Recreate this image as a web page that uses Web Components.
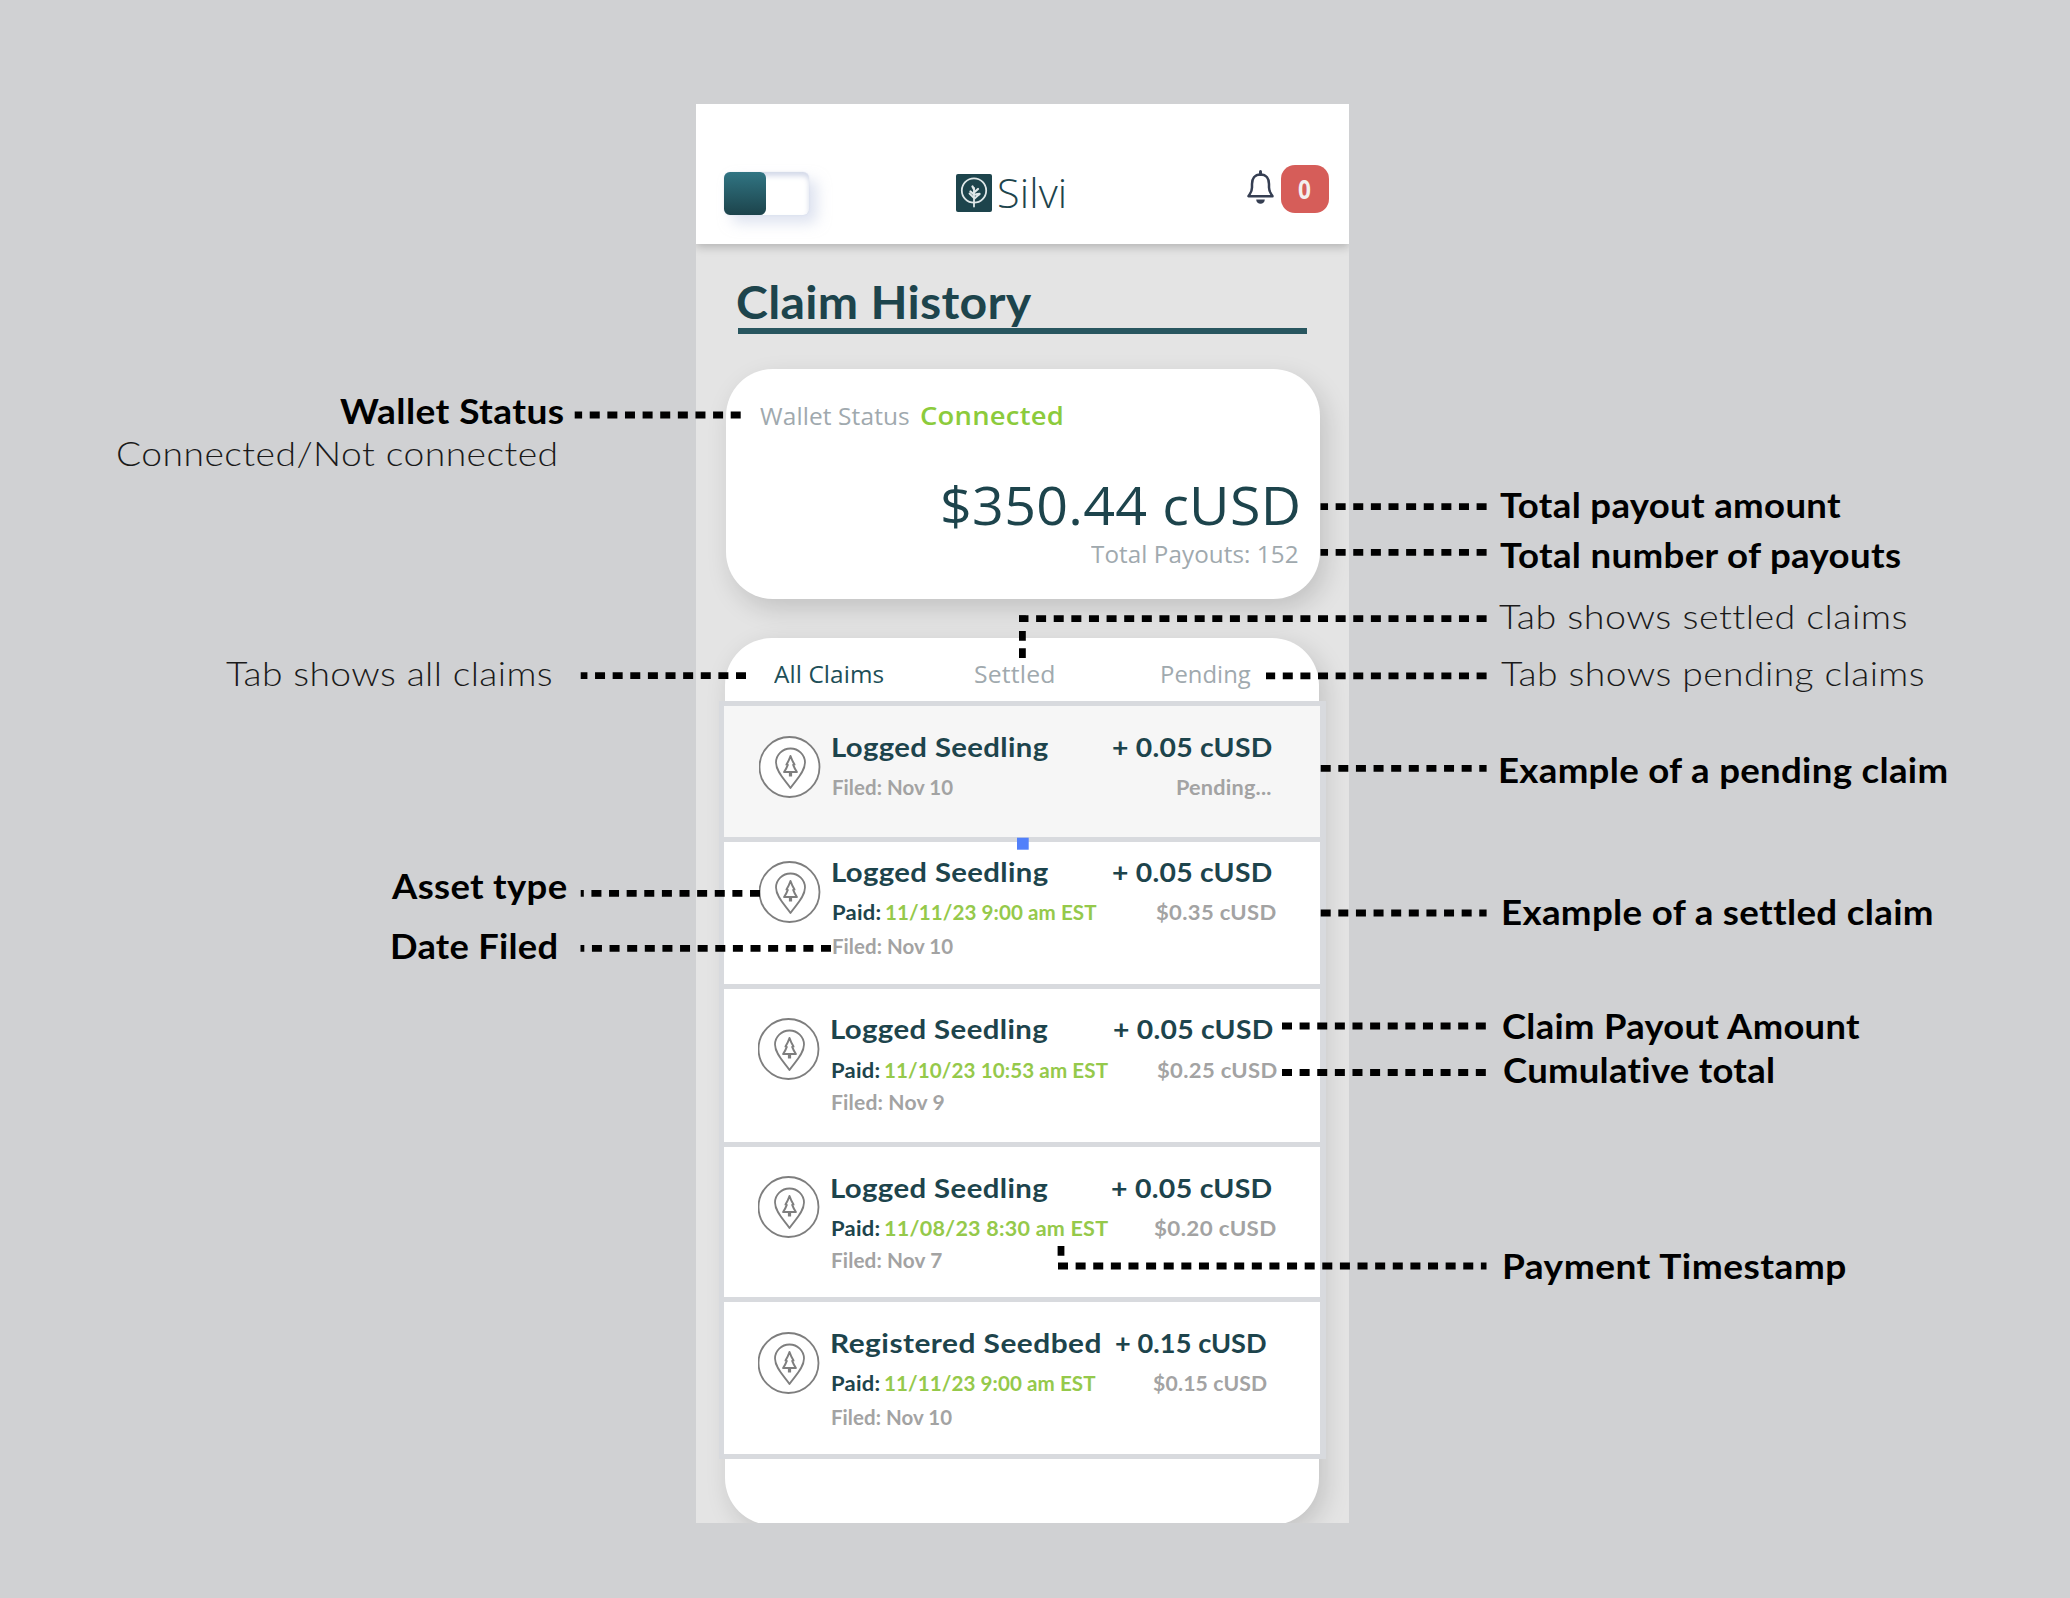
<!DOCTYPE html>
<html lang="en">
<head>
<meta charset="utf-8">
<title>Silvi – Claim History</title>
<style>
html,body{margin:0;padding:0}
body{background:#d0d1d3;width:2070px;height:1598px;overflow:hidden;font-family:Lato,"Open Sans",sans-serif}
</style>
</head>
<body>
<annotated-board></annotated-board>
<script>
const NEXA='Lato,"Open Sans",sans-serif', NUN='"Open Sans","Noto Sans",sans-serif';
const pen=document.createElement('canvas').getContext('2d');

/* A single line of text whose ink spans exactly `w` pixels: mostly by widening
   the glyphs, the remainder by tracking. */
class FitText extends HTMLElement{
  connectedCallback(){
    const g=(n,d)=>this.getAttribute(n)||d;
    const w=+g('w'),s=+g('s'),wt=g('wt','700'),f=g('f')==='nun'?NUN:NEXA,t=this.textContent;
    pen.font=`${wt} ${s}px ${f}`;
    const m=pen.measureText(t),ink=m.actualBoundingBoxLeft+m.actualBoundingBoxRight;
    const k=t.length>1?Math.pow(w/ink,.8):w/ink;
    const ls=t.length>1?(w/k-ink)/(t.length-1):0;
    const root=this.attachShadow({mode:'open'});
    root.innerHTML=`<style>:host{display:block;flex:none;width:${w}px;white-space:nowrap;font:${wt} ${s}px/1.2 ${f};color:${g('c','#000')}}
      span{display:block;width:max-content;margin-left:${m.actualBoundingBoxLeft*k}px;letter-spacing:${ls}px;transform:scaleX(${k});transform-origin:0 0}</style><span><slot></slot></span>`;
  }
}
customElements.define('fit-text',FitText);

class SilviToggle extends HTMLElement{
  connectedCallback(){
    this.attachShadow({mode:'open'}).innerHTML=`<style>
    :host{display:flex;width:85px;height:43px;border-radius:6px;background:#fff;box-shadow:8px 8px 14px rgba(190,200,225,.5),0 0 2px rgba(190,200,225,.4),inset 0 4px 5px rgba(170,182,212,.5)}
    i{width:42px;border-radius:6px;background:linear-gradient(#317583,#1c434b)}</style><i></i>`;
  }
}
customElements.define('silvi-toggle',SilviToggle);

class SilviHeader extends HTMLElement{
  connectedCallback(){
    this.attachShadow({mode:'open'}).innerHTML=`<style>
    :host{display:flex;box-sizing:border-box;height:139.500px;background:#fff;padding-left:28px;align-items:flex-start;box-shadow:0 3px 9px rgba(0,0,0,.22);position:relative}
    silvi-toggle{margin-top:68px}
    .brand{display:flex;margin:70px 0 0 147px}
    .brand fit-text{margin:-5.500px 0 0 7.500px}
    .bell{margin:66px 0 0 181.500px}
    .badge{display:flex;justify-content:center;align-items:center;width:48px;height:48px;margin:61px 0 0 6px;border-radius:14px;background:#d65d59}
    .badge fit-text{margin-top:-2px}
    svg{display:block;flex:none}</style>
    <silvi-toggle></silvi-toggle>
    <div class="brand">
      <svg width="36" height="38" viewBox="0 0 36 38"><rect width="36" height="38" rx="2" fill="#1d444c"/>
        <g fill="none" stroke="#dfe7e8" stroke-width="1.8" stroke-linecap="round"><circle cx="18" cy="16.5" r="12.2"/>
        <path d="M18 32.5V14M18 25l5-4.5M18 24l-4.500-4.500" /><path d="M18 20.500l-3.500-3M18 18.500l4-3.500M17.800 15l-1.300-2.500M20 20.500l3.500-.5" stroke-width="2.300"/></g></svg>
      <fit-text w="65" s="40" wt="300" f="nun" c="#1d444c">Silvi</fit-text>
    </div>
    <svg class="bell" width="29" height="36" viewBox="0 0 29 36"><path d="M14.500 4.500C8.500 4.500 6 9 6 14v3.500c0 4.500-2 6-3.500 8.700h24C25 23.500 23 22 23 17.500V14c0-5-2.500-9.500-8.500-9.500z" fill="none" stroke="#353e52" stroke-width="2.500" stroke-linejoin="round"/><path d="M14.500 1.500v3" stroke="#353e52" stroke-width="3" stroke-linecap="round"/><path d="M10.200 29.500h8.600a4.300 4.300 0 0 1-8.600 0z" fill="#353e52"/></svg>
    <div class="badge"><fit-text w="11.5" s="27.500" wt="700" f="nun" c="#f3efee">0</fit-text></div>`;
  }
}
customElements.define('silvi-header',SilviHeader);

class WalletCard extends HTMLElement{
  connectedCallback(){
    this.attachShadow({mode:'open'}).innerHTML=`<style>
    :host{display:flex;flex-direction:column;box-sizing:border-box;width:594.500px;height:229.500px;border-radius:47px;background:#fff;padding:30.500px 22px 0 34.500px;box-shadow:6px 10px 26px rgba(0,0,0,.15)}
    .status{display:flex;align-items:baseline;gap:12px}
    .amt{align-self:flex-end;margin-top:42.500px}
    .tot{align-self:flex-end;margin-top:2px}</style>
    <div class="status"><fit-text w="149.500" s="23.500" wt="400" f="nun" c="#a0a9ae">Wallet Status</fit-text><fit-text w="141.500" s="26" wt="600" f="nun" c="#8ccb3c">Connected</fit-text></div>
    <fit-text class="amt" w="355" s="53.500" wt="400" f="nun" c="#1d444c">$350.44 cUSD</fit-text>
    <fit-text class="tot" w="207" s="23.500" wt="400" f="nun" c="#a0a9ae">Total Payouts: 152</fit-text>`;
  }
}
customElements.define('wallet-card',WalletCard);

class SeedIcon extends HTMLElement{
  connectedCallback(){
    this.attachShadow({mode:'open'}).innerHTML=`<style>:host{display:block;flex:none;width:62px;height:62px}svg{display:block}</style>
    <svg width="62" height="62" viewBox="0 0 62 62" fill="none" stroke="#7e7e7e" stroke-width="1.800" stroke-linejoin="round">
    <circle cx="30.500" cy="31" r="30" fill="#fff" stroke-width="1.800"/>
    <path d="M31.500 52C26.500 44.500 17 36 17 26.500a14.500 14 0 0 1 29 0C46 36 36.500 44.500 31.500 52z"/>
    <path stroke-width="2" d="M31.500 20c-1.300 3.800-2.600 6.300-4 8.600l1.300.3c-1 2.700-2 4.700-3.700 7.100h12.800c-1.700-2.400-2.700-4.400-3.700-7.100l1.300-.3c-1.400-2.300-2.700-4.800-4-8.600z"/><path d="M31.500 35v5.500" stroke-width="3.200"/></svg>`;
  }
}
customElements.define('seed-icon',SeedIcon);

/* A claim: an icon beside lines of text; each piece carries its own start and width. */
class ClaimRow extends HTMLElement{
  set claim(d){
    const line=(top,parts)=>{let x=d.x;return `<div class="l" style="margin-top:${top}px">`+parts.map(([t,l,r,s,c,wt])=>{
      const h=`<fit-text style="margin-left:${l-x}px" w="${r-l}" s="${s}" wt="${wt||700}" c="${c}">${t}</fit-text>`;x=r;return h}).join('')+`</div>`};
    this.attachShadow({mode:'open'}).innerHTML=`<style>
    :host{display:flex;box-sizing:border-box;width:607px;height:${d.h}px;border:solid #d8dade;border-width:5px 6px 0 5px;background:${d.bg||'#fff'};align-items:flex-start}
    seed-icon{margin:${d.icon}px 0 0 ${d.ix-724}px}
    .t{margin-left:${d.x-d.ix-62}px}
    .l{display:flex}
    .l:first-child{position:relative;top:1.200px}</style><seed-icon></seed-icon><div class="t">${d.lines.map(l=>line(...l)).join('')}</div>`;
  }
}
customElements.define('claim-row',ClaimRow);

const T='#1d444c',G='#a3a3a3',V='#95c94b';
const CLAIMS=[
 {h:135.5,icon:29.7,ix:759,x:833,bg:'#f6f6f6',lines:[
  [24.9,[['Logged Seedling',833.5,1048.5,26.5,T],['+ 0.05 cUSD',1113,1272,26.5,T]]],
  [11.9,[['Filed: Nov 10',833,954,20,G],['Pending...',1177.5,1271,20,G]]]]},
 {h:147.5,icon:19.5,ix:759,x:833,lines:[
  [14.5,[['Logged Seedling',833.5,1048.5,26.5,T],['+ 0.05 cUSD',1113,1272,26.5,T]]],
  [12,[['Paid:',833.5,881.5,20,T],['11/11/23 9:00 am EST',886.5,1097,20,V],['$0.35 cUSD',1156,1276,20,G]]],
  [10.6,[['Filed: Nov 10',833,954,20,G]]]]},
 {h:157.5,icon:29.3,ix:758,x:832,lines:[
  [24,[['Logged Seedling',832.5,1048,26.5,T],['+ 0.05 cUSD',1114,1273,26.5,T]]],
  [13.3,[['Paid:',832,880,20,T],['11/10/23 10:53 am EST',885,1108,20,V],['$0.25 cUSD',1157,1277,20,G]]],
  [8.3,[['Filed: Nov 9',832.5,945,20,G]]]]},
 {h:155.5,icon:29.5,ix:758,x:832,lines:[
  [25.2,[['Logged Seedling',832.5,1048,26.5,T],['+ 0.05 cUSD',1112,1272,26.5,T]]],
  [12.3,[['Paid:',832,880,20,T],['11/08/23 8:30 am EST',885,1108,20,V],['$0.20 cUSD',1154,1276,20,G]]],
  [8.3,[['Filed: Nov 7',832,942,20,G]]]]},
 {h:157.3,icon:29.7,ix:758,x:832,lines:[
  [24.4,[['Registered Seedbed',832.5,1100.5,26.5,T],['+ 0.15 cUSD',1116.5,1267,26.5,T]]],
  [12.6,[['Paid:',832,880,20,T],['11/11/23 9:00 am EST',885,1095.5,20,V],['$0.15 cUSD',1153,1267,20,G]]],
  [10.6,[['Filed: Nov 10',832,953,20,G]]]]}
];

class ClaimList extends HTMLElement{
  connectedCallback(){
    const r=this.attachShadow({mode:'open'});
    r.innerHTML=`<style>
    :host{display:flex;flex-direction:column;width:594px;border-radius:47px;background:#fff;box-shadow:6px 8px 26px rgba(0,0,0,.15)}
    .tabs{display:flex;box-sizing:border-box;height:63.300px;padding:22.500px 0 0 48.500px}
    .rows{display:flex;flex-direction:column;width:607px;margin-left:-6px}
    .end{height:71px}
    .end::before{content:"";display:block;height:5px;margin:0 -7px 0 -6px;background:#d8dade}</style>
    <div class="tabs"><fit-text w="110" s="23.500" wt="500" f="nun" c="#1d4f58">All Claims</fit-text>
    <fit-text style="margin-left:92px" w="79" s="23.500" wt="400" f="nun" c="#a0a9ae">Settled</fit-text>
    <fit-text style="margin-left:107.500px" w="89" s="23.500" wt="400" f="nun" c="#a0a9ae">Pending</fit-text></div>
    <div class="rows"></div><div class="end"></div>`;
    for(const c of CLAIMS){const e=document.createElement('claim-row');e.claim=c;r.querySelector('.rows').append(e)}
  }
}
customElements.define('claim-list',ClaimList);

class PhoneScreen extends HTMLElement{
  connectedCallback(){
    this.attachShadow({mode:'open'}).innerHTML=`<style>
    :host{display:flex;flex-direction:column;width:652.500px;height:1419px;overflow:hidden;background:#e4e4e4}
    silvi-header{flex:none}
    h1{margin:30.500px 0 0 41.500px;width:569px;height:53.500px;flex:none;box-sizing:content-box;border-bottom:6px solid #28565f;font-weight:inherit}
    wallet-card{margin:35.500px 0 0 29.500px;flex:none}
    claim-list{margin:39px 0 0 29px;flex:none}</style>
    <silvi-header></silvi-header>
    <h1><fit-text w="295" s="46" wt="700" c="#1d444c">Claim History</fit-text></h1>
    <wallet-card></wallet-card><claim-list></claim-list>`;
  }
}
customElements.define('phone-screen',PhoneScreen);

/* Labels: text, left, right, baseline, weight. They float freely on the board. */
const LABELS=[
 ['Wallet Status',340,563,423.7,700],['Connected/Not connected',117,555,465.7,300],['Tab shows all claims',226,551,685.3,300],
 ['Asset type',391,567,899,700],['Date Filed',392,556.500,958.3,700],
 ['Total payout amount',1499.500,1840.500,518,700],['Total number of payouts',1499.500,1901,567.7,700],
 ['Tab shows settled claims',1499,1905,628.3,300],['Tab shows pending claims',1501,1923,685.5,300],
 ['Example of a pending claim',1500,1947,783,700],['Example of a settled claim',1503,1931,925,700],
 ['Claim Payout Amount',1503,1861,1038.5,700],['Cumulative total',1504,1774,1083,700],['Payment Timestamp',1504,1847,1279,700]];
/* Leaders: x1, x2, y; the dash phase starts at x1. */
const LEADERS=[[740.7,574.7,415],[746,580.7,675.7],[760,580.7,893.3],[831,580.5,948.3],
 [1486.6,1320.5,506.6],[1486.6,1320.5,552.4],[1486.6,1019,618.7],[1486.6,1266,675.8],
 [1320.7,1486.6,768.3],[1320.7,1486.6,913],[1282,1486,1026],[1282,1486,1072.5],[1058,1486.5,1266]];

class AnnotatedBoard extends HTMLElement{
  connectedCallback(){
    this.attachShadow({mode:'open'}).innerHTML=`<style>
    :host{display:flex;position:relative;box-sizing:border-box;width:2070px;height:1598px;padding:104.300px 0 0 696px}
    svg{position:absolute;left:0;top:0}
    .n{position:absolute}</style>
    <phone-screen></phone-screen>
    <svg width="2070" height="1598" stroke="#000" stroke-width="6.800" stroke-dasharray="10 7.620">
    ${LEADERS.map(([a,b,y])=>`<path d="M${a} ${y}H${b}"/>`).join('')}
    <path stroke-dasharray="none" d="M1022.400 615.500v6.500M1022.400 631v9.800M1022.400 648.300v9.800M1061 1246v9.700"/>
    <rect x="1017" y="837.700" width="11.700" height="12" fill="#5280fa" stroke="none"/></svg>
    ${LABELS.map(([t,l,r,b,w])=>`<fit-text class="n" style="left:${l}px;top:${b-32.6}px" w="${r-l}" s="34" wt="${w}" c="${w<400?'#1a1a1a':'#000'}">${t}</fit-text>`).join('')}`;
  }
}
customElements.define('annotated-board',AnnotatedBoard);
</script>
</body>
</html>
